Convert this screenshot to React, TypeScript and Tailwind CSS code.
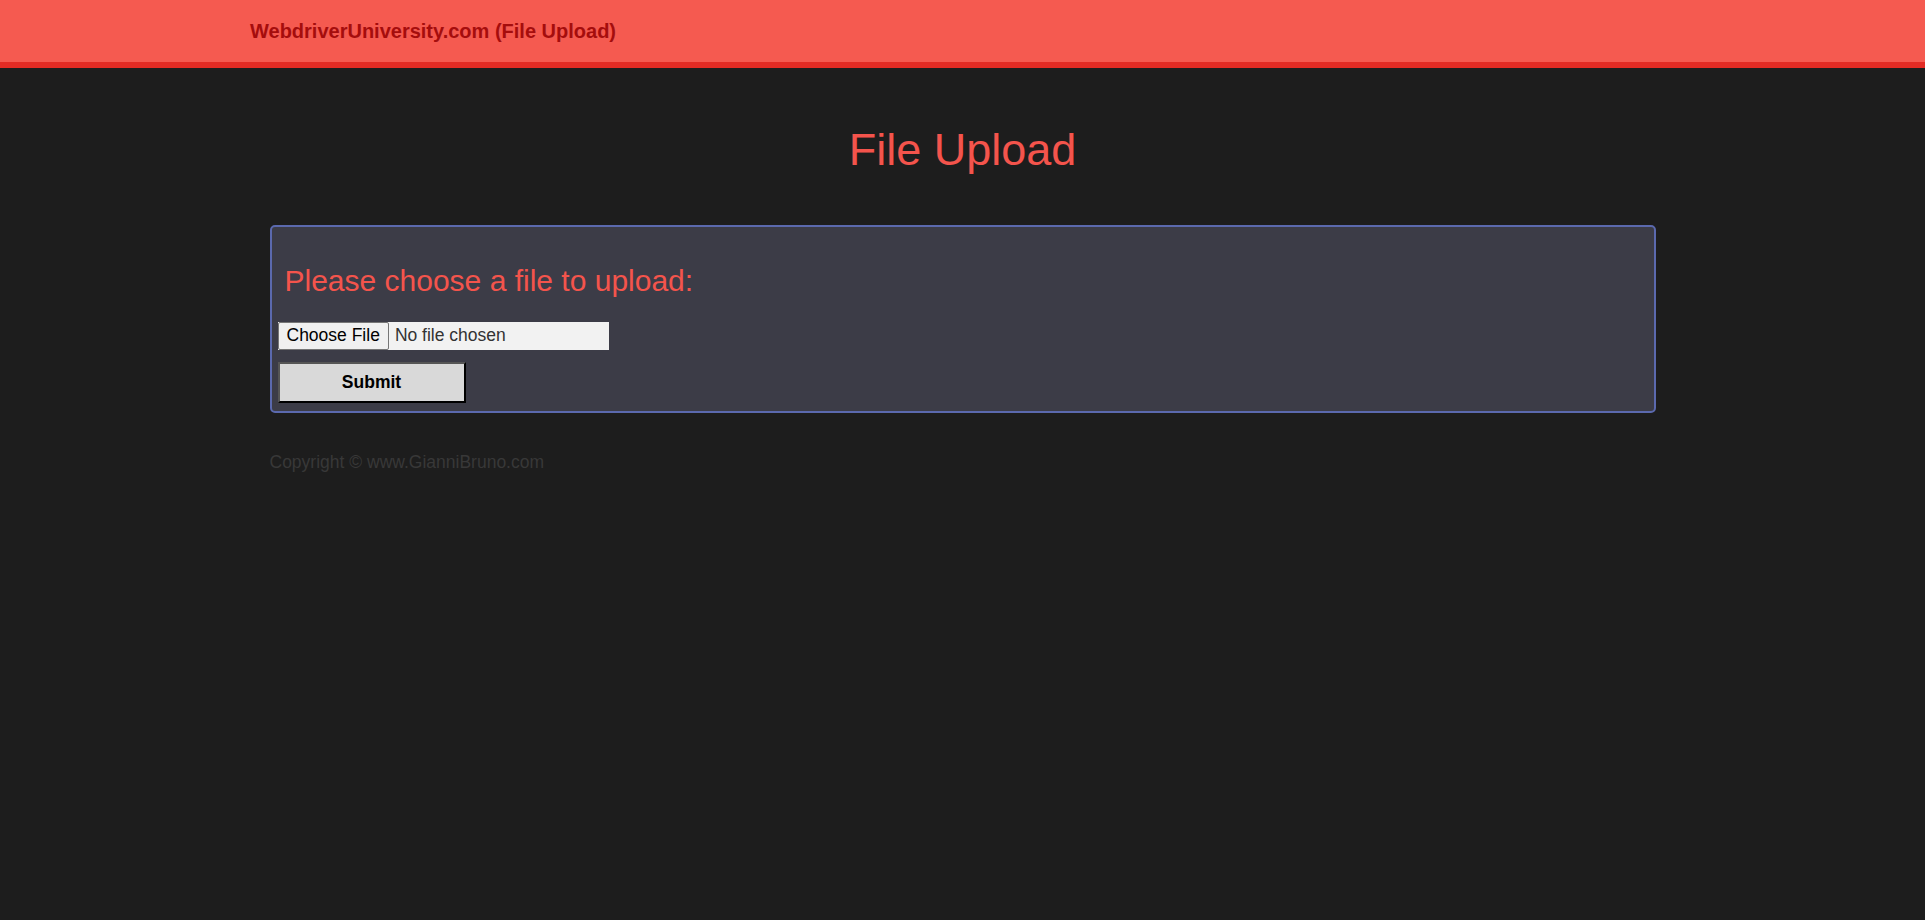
export default function App() {
  return (
    <div className="min-h-[920px] bg-[#1d1d1d] font-['Liberation_Sans',Arial,sans-serif]">
      <header className="h-[68px] bg-[#f55a50] border-b-[6px] border-[#e32b24] flex items-center pl-[250px]">
        <span className="text-[20px] leading-none font-bold text-[#a50d0d]">
          WebdriverUniversity.com (File Upload)
        </span>
      </header>

      <main className="flex flex-col items-center">
        <h1 className="mt-[59px] text-[45px] leading-none text-[#f4544c]">File Upload</h1>

        <div className="w-[1386px] mt-[53px]">
          <div className="h-[188px] border-2 border-[#5b69ae] rounded-[5px] bg-[#3c3c47] pl-[6px] pt-[39px] flex flex-col">
            <h3 className="ml-[7px] text-[30px] leading-none text-[#f4544c]">
              Please choose a file to upload:
            </h3>

            <div className="mt-[26px] w-[331px] h-[28px] bg-[#f2f2f2] flex items-center text-[17.5px] leading-none">
              <button className="h-full px-[8px] bg-[#f0f0f0] border border-[#767676] rounded-[2px] text-black">
                Choose File
              </button>
              <span className="ml-[6px] text-[#333]">No file chosen</span>
            </div>

            <button className="mt-[12px] w-[188px] h-[41px] bg-[#d9d9d9] border-2 border-t-[#555] border-l-[#555] border-b-black border-r-black text-[17.5px] font-bold text-black">
              Submit
            </button>
          </div>

          <p className="mt-[41px] text-[17.5px] leading-none text-[#383838]">
            Copyright © www.GianniBruno.com
          </p>
        </div>
      </main>
    </div>
  );
}
